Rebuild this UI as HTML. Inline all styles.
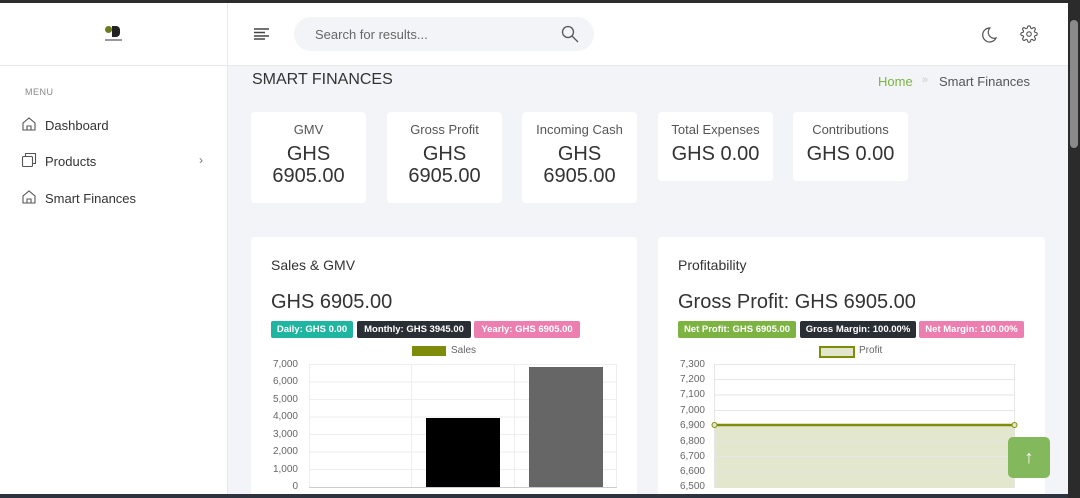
<!DOCTYPE html>
<html><head><meta charset="utf-8"><style>
*{box-sizing:border-box;margin:0;padding:0}
body{width:1080px;height:498px;overflow:hidden;background:#f3f4f7;font-family:"Liberation Sans",sans-serif;position:relative;color:#495057}
.abs{position:absolute}
.card{position:absolute;background:#fff;border-radius:4px;text-align:center}
.card .t{font-size:13px;color:#555;margin-top:10px}
.card .v{font-size:20px;color:#333;line-height:22px;margin-top:6px}
.badge{position:absolute;height:17px;font-size:9.5px;font-weight:bold;color:#fff;line-height:17px;text-align:center;border-radius:2px}
.yl{position:absolute;font-size:10px;color:#666;text-align:right;width:40px}
</style></head><body>
<div class="abs" style="left:0;top:0;width:1080px;height:3px;background:#2b2b2b"></div>
<div class="abs" style="left:0;top:3px;width:228px;height:495px;background:#fff;border-right:1px solid #e8e8ee"></div>
<div class="abs" style="left:228px;top:3px;width:840px;height:63px;background:#fff;border-bottom:1px solid #e8e8ee"></div>
<div class="abs" style="left:0;top:65px;width:228px;height:1px;background:#e8e8ee"></div>
<!-- logo -->
<div class="abs" style="left:105px;top:26px;width:7px;height:7px;border-radius:50%;background:#6b7a1c"></div>
<div class="abs" style="left:112px;top:26px;width:8px;height:11px;background:#222;border-radius:0 4px 4px 0"></div>
<div class="abs" style="left:105px;top:39px;width:17px;height:2px;background:#999"></div>
<div class="abs" style="left:25px;top:87px;font-size:9px;color:#888;letter-spacing:.5px">MENU</div>
<svg class="abs" style="left:21px;top:116px" width="16" height="16" viewBox="0 0 16 16" fill="none" stroke="#555" stroke-width="1.1"><path d="M2 7L8 2l6 5v7H2z"/><path d="M6 14v-4h4v4"/></svg>
<div class="abs" style="left:45px;top:118px;font-size:13px;color:#333">Dashboard</div>
<svg class="abs" style="left:21px;top:152px" width="16" height="16" viewBox="0 0 16 16" fill="none" stroke="#555" stroke-width="1.1"><rect x="1.5" y="4.5" width="10" height="10" rx="1"/><path d="M4.5 4.5V1.5h10v10h-3"/></svg>
<div class="abs" style="left:45px;top:154px;font-size:13px;color:#333">Products</div>
<div class="abs" style="left:199px;top:153px;font-size:12px;color:#777">›</div>
<svg class="abs" style="left:21px;top:189px" width="16" height="16" viewBox="0 0 16 16" fill="none" stroke="#555" stroke-width="1.1"><path d="M2 7L8 2l6 5v7H2z"/><path d="M6 14v-4h4v4"/></svg>
<div class="abs" style="left:45px;top:191px;font-size:13px;color:#333">Smart Finances</div>
<!-- header -->
<svg class="abs" style="left:254px;top:28px" width="16" height="12"><path d="M0 1h15M0 4.5h11M0 8h15M0 11h11" stroke="#444" stroke-width="1.4"/></svg>
<div class="abs" style="left:294px;top:17px;width:300px;height:34px;border-radius:17px;background:#f3f4f7"></div>
<div class="abs" style="left:315px;top:27px;font-size:13px;color:#666">Search for results...</div>
<svg class="abs" style="left:561px;top:25px" width="18" height="18" fill="none" stroke="#555" stroke-width="1.3"><circle cx="7" cy="7" r="5.5"/><path d="M11 11l6 6"/></svg>
<svg class="abs" style="left:980px;top:26px" width="18" height="18" fill="none" stroke="#555" stroke-width="1.2"><path d="M10 2A7 7 0 1 0 16 12A6 6 0 0 1 10 2z"/></svg>
<svg class="abs" style="left:1020px;top:25px" width="18" height="18" viewBox="0 0 24 24" fill="none" stroke="#555" stroke-width="1.5"><circle cx="12" cy="12" r="3"/><path d="M19.4 15a1.7 1.7 0 0 0 .3 1.8l.1.1a2 2 0 1 1-2.8 2.8l-.1-.1a1.7 1.7 0 0 0-1.8-.3 1.7 1.7 0 0 0-1 1.5V21a2 2 0 1 1-4 0v-.1a1.7 1.7 0 0 0-1.1-1.5 1.7 1.7 0 0 0-1.8.3l-.1.1a2 2 0 1 1-2.8-2.8l.1-.1a1.7 1.7 0 0 0 .3-1.8 1.7 1.7 0 0 0-1.5-1H3a2 2 0 1 1 0-4h.1a1.7 1.7 0 0 0 1.5-1.1 1.7 1.7 0 0 0-.3-1.8l-.1-.1a2 2 0 1 1 2.8-2.8l.1.1a1.7 1.7 0 0 0 1.8.3H9a1.7 1.7 0 0 0 1-1.5V3a2 2 0 1 1 4 0v.1a1.7 1.7 0 0 0 1 1.5 1.7 1.7 0 0 0 1.8-.3l.1-.1a2 2 0 1 1 2.8 2.8l-.1.1a1.7 1.7 0 0 0-.3 1.8V9a1.7 1.7 0 0 0 1.5 1H21a2 2 0 1 1 0 4h-.1a1.7 1.7 0 0 0-1.5 1z"/></svg>
<div class="abs" style="left:252px;top:71px;font-size:16px;color:#333">SMART FINANCES</div>
<div class="abs" style="left:878px;top:74px;font-size:13px;color:#7cb342">Home</div>
<div class="abs" style="left:922px;top:74px;font-size:11px;color:#ccc">»</div>
<div class="abs" style="left:939px;top:74px;font-size:13px;color:#555">Smart Finances</div>
<!-- stat cards -->
<div class="card" style="left:251px;top:112px;width:115px;height:91px"><div class="t">GMV</div><div class="v">GHS<br>6905.00</div></div>
<div class="card" style="left:387px;top:112px;width:115px;height:91px"><div class="t">Gross Profit</div><div class="v">GHS<br>6905.00</div></div>
<div class="card" style="left:522px;top:112px;width:115px;height:91px"><div class="t">Incoming Cash</div><div class="v">GHS<br>6905.00</div></div>
<div class="card" style="left:658px;top:112px;width:115px;height:69px"><div class="t">Total Expenses</div><div class="v">GHS 0.00</div></div>
<div class="card" style="left:793px;top:112px;width:115px;height:69px"><div class="t">Contributions</div><div class="v">GHS 0.00</div></div>
<!-- big cards -->
<div class="card" style="left:251px;top:237px;width:386px;height:261px"></div>
<div class="card" style="left:658px;top:237px;width:387px;height:261px"></div>
<div class="abs" style="left:271px;top:257px;font-size:14px;color:#333">Sales &amp; GMV</div>
<div class="abs" style="left:271px;top:291px;font-size:20px;color:#333">GHS 6905.00</div>
<div class="badge" style="left:271px;top:321px;width:82px;background:#1fb5a0">Daily: GHS 0.00</div>
<div class="badge" style="left:357px;top:321px;width:114px;background:#2a2f36">Monthly: GHS 3945.00</div>
<div class="badge" style="left:474px;top:321px;width:106px;background:#ec7faf">Yearly: GHS 6905.00</div>
<div class="abs" style="left:412px;top:346px;width:34px;height:10px;background:#7f8c0a"></div>
<div class="abs" style="left:451px;top:345px;font-size:10px;color:#666">Sales</div>
<svg class="abs" style="left:300px;top:360px" width="330" height="138">
<g stroke="#eee" stroke-width="1">
<path d="M9 4.5h308M9 22h308M9 39.5h308M9 57h308M9 74.5h308M9 92h308M9 109.5h308"/>
<path d="M111.5 4v124M214.5 4v124M316.5 4v124M9.5 4v124"/></g>
<path d="M9 127.5h308" stroke="#ccc"/>
<rect x="126" y="58" width="74" height="69" fill="#000"/>
<rect x="229" y="7" width="74" height="120" fill="#666"/>
</svg>
<div class="yl" style="left:258px;top:359px">7,000</div><div class="yl" style="left:258px;top:376px">6,000</div><div class="yl" style="left:258px;top:394px">5,000</div><div class="yl" style="left:258px;top:411px">4,000</div><div class="yl" style="left:258px;top:429px">3,000</div><div class="yl" style="left:258px;top:446px">2,000</div><div class="yl" style="left:258px;top:464px">1,000</div><div class="yl" style="left:258px;top:481px">0</div>
<div class="abs" style="left:678px;top:257px;font-size:14px;color:#333">Profitability</div>
<div class="abs" style="left:678px;top:291px;font-size:20px;color:#333">Gross Profit: GHS 6905.00</div>
<div class="badge" style="left:678px;top:321px;width:118px;background:#7cb342">Net Profit: GHS 6905.00</div>
<div class="badge" style="left:800px;top:321px;width:116px;background:#2a2f36">Gross Margin: 100.00%</div>
<div class="badge" style="left:919px;top:321px;width:105px;background:#ec7faf">Net Margin: 100.00%</div>
<div class="abs" style="left:819px;top:346px;width:36px;height:12px;background:#e2e6cc;border:2px solid #7f8c0a"></div>
<div class="abs" style="left:859px;top:345px;font-size:10px;color:#666">Profit</div>
<svg class="abs" style="left:700px;top:360px" width="330" height="138">
<path d="M14 425" />
<rect x="14.5" y="65" width="300" height="63" fill="#e3e7cd"/>
<g stroke="#e6e6e6" stroke-width="1">
<path d="M14 4.5h300M14 19.5h300M14 35h300M14 50.5h300M14 81h300M14 96.5h300M14 112h300M14.5 4v124M314.5 4v124"/></g>
<path d="M14.5 65h300" stroke="#7f8c0a" stroke-width="2.5"/>
<circle cx="14.5" cy="65" r="2.5" fill="#e3e7cd" stroke="#7f8c0a"/><circle cx="314.5" cy="65" r="2.5" fill="#e3e7cd" stroke="#7f8c0a"/>
</svg>
<div class="yl" style="left:665px;top:359px">7,300</div><div class="yl" style="left:665px;top:374px">7,200</div><div class="yl" style="left:665px;top:389px">7,100</div><div class="yl" style="left:665px;top:405px">7,000</div><div class="yl" style="left:665px;top:420px">6,900</div><div class="yl" style="left:665px;top:436px">6,800</div><div class="yl" style="left:665px;top:451px">6,700</div><div class="yl" style="left:665px;top:466px">6,600</div><div class="yl" style="left:665px;top:481px">6,500</div>
<div class="abs" style="left:1008px;top:437px;width:42px;height:41px;border-radius:5px;background:#84b85c;color:#fff;font-size:18px;font-weight:bold;text-align:center;line-height:41px">↑</div>
<!-- scrollbar -->
<div class="abs" style="left:1068px;top:3px;width:12px;height:495px;background:#2b2b2b"></div>
<div class="abs" style="left:1070px;top:20px;width:8px;height:128px;background:#8a8a8a;border-radius:4px"></div>
<div class="abs" style="left:0;top:494px;width:1068px;height:4px;background:#2d3440"></div>
</body></html>
